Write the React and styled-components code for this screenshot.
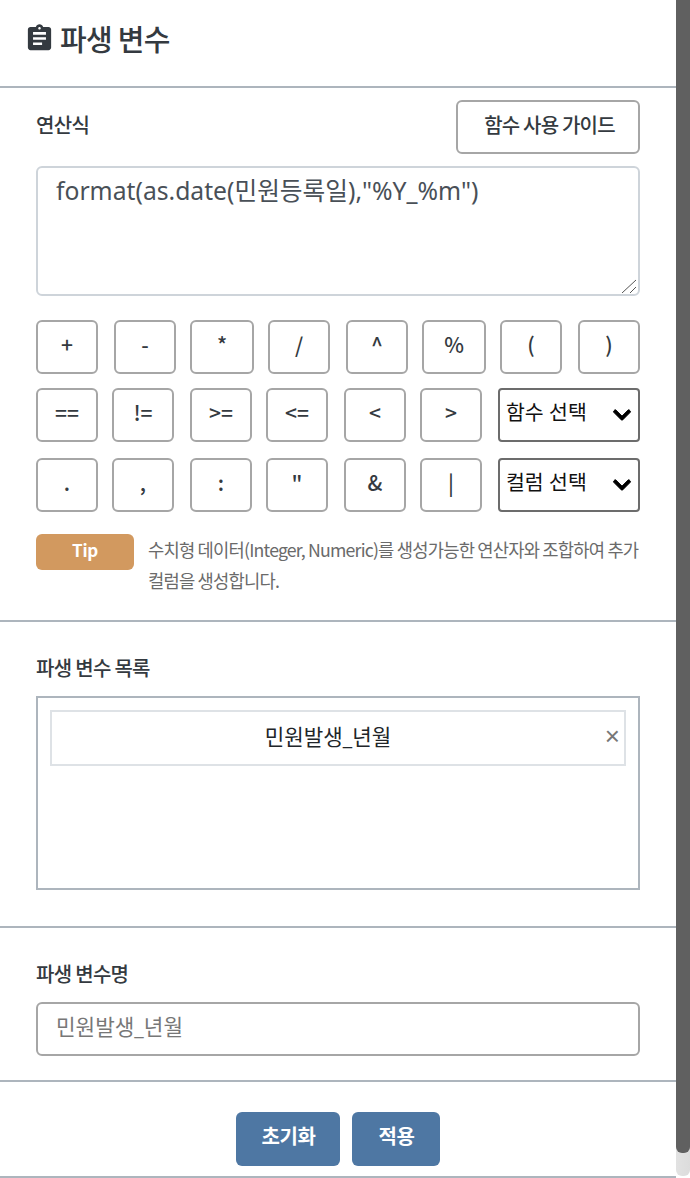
import React from "react";
import styled, { createGlobalStyle } from "styled-components";
import { MdAssignment } from "react-icons/md";
import { FaChevronDown } from "react-icons/fa";

const FONT = `"Noto Sans CJK KR", "Noto Sans", sans-serif`;
const INPUT_FONT = `"Noto Sans", "Noto Sans CJK KR", sans-serif`;

const GlobalStyle = createGlobalStyle`
  html, body {
    margin: 0;
    padding: 0;
    background: #fff;
    height: 100%;
    overflow: hidden;
  }
  * {
    box-sizing: border-box;
  }
`;

const ROW_ONE = [
  { label: "+" },
  { label: "-", extra: true },
  { label: "*", wide: true },
  { label: "/" },
  { label: "^", extra: true },
  { label: "%", wide: true },
  { label: "(" },
  { label: ")", extra: true },
];

const ROW_TWO = [
  { label: "==" },
  { label: "!=" },
  { label: ">=", extra: true },
  { label: "<=" },
  { label: "<", extra: true },
  { label: ">" },
];

const ROW_THREE = [
  { label: "." },
  { label: "," },
  { label: ":", extra: true },
  { label: '"' },
  { label: "&", extra: true },
  { label: "|" },
];

const KeyRow = ({ keys, select, spaced }) => (
  <Keys $spaced={spaced}>
    {keys.map((key) => (
      <Key key={key.label} $wide={key.wide} $extra={key.extra}>
        {key.label}
      </Key>
    ))}
    {select && (
      <SelectBox>
        {select}
        <FaChevronDown size={20} color="#000" />
      </SelectBox>
    )}
  </Keys>
);

const App = () => {
  return (
    <Page>
      <GlobalStyle />
      <Panel>
        <Header>
          <MdAssignment size={31} color="#343a40" />
          <Title>파생 변수</Title>
        </Header>

        <FormulaSection>
          <FormulaTop>
            <FormulaLabel>연산식</FormulaLabel>
            <GuideButton>함수 사용 가이드</GuideButton>
          </FormulaTop>
          <FormulaBox>
            <Formula readOnly value={'format(as.date(민원등록일),"%Y_%m")'} />
            <ResizeGrip viewBox="0 0 16 14" width="16" height="14">
              <path d="M1 14 L15 1 M9 14 L15 8" stroke="#555" strokeWidth="1" fill="none" />
            </ResizeGrip>
          </FormulaBox>
          <KeyGrid>
            <KeyRow keys={ROW_ONE} />
            <KeyRow keys={ROW_TWO} select="함수 선택" />
            <KeyRow keys={ROW_THREE} select="컬럼 선택" spaced />
          </KeyGrid>
          <TipRow>
            <TipBadge>Tip</TipBadge>
            <TipText>
              수치형 데이터(Integer, Numeric)를 생성가능한 연산자와 조합하여 추가
              컬럼을 생성합니다.
            </TipText>
          </TipRow>
        </FormulaSection>

        <ListSection>
          <Label>파생 변수 목록</Label>
          <ListBox>
            <ListItem>
              민원발생_년월
              <RemoveMark>×</RemoveMark>
            </ListItem>
          </ListBox>
        </ListSection>

        <NameSection>
          <Label>파생 변수명</Label>
          <NameInput readOnly placeholder="민원발생_년월" />
        </NameSection>

        <Footer>
          <ActionButton $width={104}>초기화</ActionButton>
          <ActionButton $width={88}>적용</ActionButton>
        </Footer>
      </Panel>
      <Scrollbar>
        <ScrollThumb />
      </Scrollbar>
    </Page>
  );
};

const Page = styled.div`
  display: flex;
  width: 690px;
  height: 1178px;
  font-family: ${FONT};
  background: #fff;
`;

const Panel = styled.main`
  width: 676px;
  flex: none;
`;

const Header = styled.header`
  height: 88px;
  padding: 0 0 10px 24px;
  display: flex;
  align-items: center;
  gap: 5px;
  border-bottom: 2px solid #adb5bd;
`;

const Title = styled.h1`
  margin: 0;
  font-size: 29px;
  font-weight: 500;
  letter-spacing: -0.7px;
  color: #343a40;
`;

const FormulaSection = styled.section`
  height: 534px;
  padding: 12px 36px 0;
  border-bottom: 2px solid #adb5bd;
`;

const FormulaTop = styled.div`
  display: flex;
  align-items: center;
  justify-content: space-between;
`;

const Label = styled.h2`
  margin: 0;
  font-size: 20px;
  line-height: 26px;
  font-weight: 500;
  letter-spacing: -0.7px;
  color: #343a40;
`;

const FormulaLabel = styled(Label)`
  margin-bottom: 4px;
`;

const GuideButton = styled.button`
  width: 184px;
  height: 54px;
  padding: 0 0 6px 3px;
  border: 2px solid #a6a6a6;
  border-radius: 6px;
  background: #fff;
  font-family: ${FONT};
  font-size: 20px;
  font-weight: 500;
  letter-spacing: -0.8px;
  color: #343a40;
`;

const FormulaBox = styled.div`
  position: relative;
  margin-top: 12px;
`;

const Formula = styled.textarea`
  display: block;
  width: 604px;
  height: 130px;
  padding: 6px 18px;
  border: 2px solid #ced4da;
  border-radius: 6px;
  outline: none;
  resize: none;
  font-family: ${INPUT_FONT};
  font-size: 24.7px;
  line-height: 34px;
  color: #495057;
`;

const ResizeGrip = styled.svg`
  position: absolute;
  right: 3px;
  bottom: 3px;
`;

const KeyGrid = styled.div`
  margin-top: 24px;
  display: flex;
  flex-direction: column;
  gap: 14px;
`;

const Keys = styled.div`
  display: flex;
  gap: 14px;
  margin-top: ${(p) => (p.$spaced ? "2px" : "0")};
`;

const Key = styled.button`
  width: ${(p) => (p.$wide ? "64px" : "62px")};
  height: 54px;
  margin-left: ${(p) => (p.$extra ? "2px" : "0")};
  padding: 0 0 6px;
  border: 2px solid #a6a6a6;
  border-radius: 6px;
  background: #fff;
  font-family: ${FONT};
  font-size: 21px;
  font-weight: 500;
  color: #343a40;
`;

const SelectBox = styled.div`
  width: 142px;
  height: 54px;
  margin-left: 2px;
  padding: 0 6px 8px 6px;
  display: flex;
  align-items: center;
  justify-content: space-between;
  border: 2px solid #6c6c6c;
  border-radius: 4px;
  font-family: ${INPUT_FONT};
  font-size: 20.5px;
  color: #111;

  svg {
    margin-top: 8px;
    stroke: #000;
    stroke-width: 24px;
  }
`;

const TipRow = styled.div`
  margin-top: 22px;
  display: flex;
  align-items: flex-start;
  gap: 14px;
`;

const TipBadge = styled.div`
  width: 98px;
  height: 36px;
  flex: none;
  padding-bottom: 6px;
  display: flex;
  align-items: center;
  justify-content: center;
  border-radius: 6px;
  background: #d2995f;
  font-size: 17px;
  font-weight: 700;
  letter-spacing: -0.3px;
  color: #fff;
`;

const TipText = styled.p`
  margin: 0;
  font-size: 17.7px;
  line-height: 31px;
  letter-spacing: -0.8px;
  color: #6a6a6a;
`;

const ListSection = styled.section`
  height: 306px;
  padding: 33px 36px 0;
  border-bottom: 2px solid #adb5bd;
`;

const ListBox = styled.div`
  height: 194px;
  margin-top: 15px;
  padding: 12px;
  border: 2px solid #adb5bd;
`;

const ListItem = styled.div`
  position: relative;
  height: 56px;
  padding: 0 20px 6px 0;
  display: flex;
  align-items: center;
  justify-content: center;
  border: 2px solid #dee2e6;
  font-family: ${INPUT_FONT};
  font-size: 21.2px;
  color: #212529;
`;

const RemoveMark = styled.span`
  position: absolute;
  right: 4px;
  top: 10px;
  font-family: "Liberation Sans", sans-serif;
  font-size: 26px;
  line-height: 28px;
  color: #777;
`;

const NameSection = styled.section`
  height: 154px;
  padding: 33px 36px 0;
  border-bottom: 2px solid #adb5bd;
`;

const NameInput = styled.input`
  display: block;
  width: 604px;
  height: 54px;
  margin-top: 15px;
  padding: 0 18px 6px;
  border: 2px solid #a6a6a6;
  border-radius: 6px;
  outline: none;
  font-family: ${INPUT_FONT};
  font-size: 21.3px;

  &::placeholder {
    color: #777;
    opacity: 1;
  }
`;

const Footer = styled.footer`
  height: 96px;
  padding-top: 30px;
  display: flex;
  justify-content: center;
  gap: 12px;
  border-bottom: 2px solid #adb5bd;
`;

const ActionButton = styled.button`
  width: ${(p) => p.$width}px;
  height: 54px;
  padding: 0 0 8px 1px;
  border: none;
  border-radius: 6px;
  background: #4e77a3;
  font-family: ${FONT};
  font-size: 20px;
  font-weight: 700;
  letter-spacing: -0.4px;
  color: #fff;
`;

const Scrollbar = styled.div`
  width: 14px;
  height: 1176px;
  flex: none;
  background: linear-gradient(90deg, #e2e2e2, #dcdcdc);
  border-radius: 0 0 6px 6px;
`;

const ScrollThumb = styled.div`
  height: 1153px;
  background: #606060;
  border-radius: 0 0 6px 6px;
`;

export default App;
